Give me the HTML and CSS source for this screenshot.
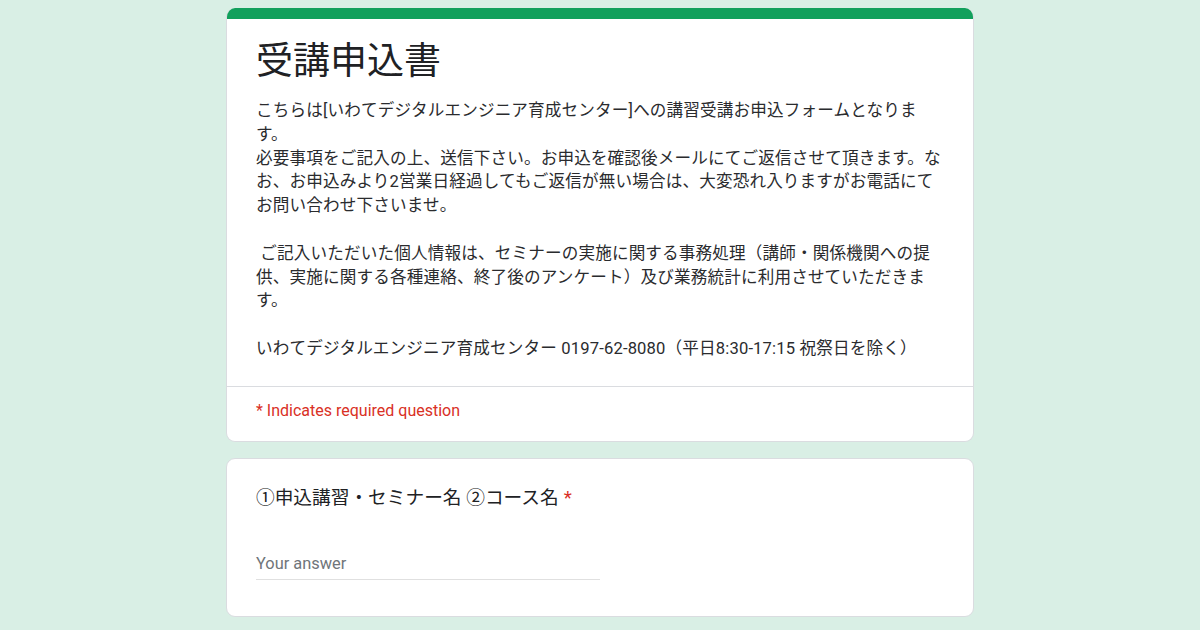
FILE: index.html
```html
<!DOCTYPE html>
<html lang="ja">
<head>
    <meta charset="utf-8">
    <title>受講申込書</title>
    <link rel="stylesheet" href="styles.css">
</head>
<body>
    <div class="form">
        <div class="card header-card">
            <div class="accent"></div>
            <div class="header-body">
                <h1 class="title">受講申込書</h1>
                <div class="desc">
                    こちらは[いわてデジタルエンジニア育成センター]への講習受講お申込フォームとなりま<br>す。<br>
                    必要事項をご記入の上、送信下さい。お申込を確認後メールにてご返信させて頂きます。な<br>お、お申込みより2営業日経過してもご返信が無い場合は、大変恐れ入りますがお電話にて<br>お問い合わせ下さいませ。<br>
                    <br>
                    &nbsp;ご記入いただいた個人情報は、セミナーの実施に関する事務処理（講師・関係機関への提<br>供、実施に関する各種連絡、終了後のアンケート）及び業務統計に利用させていただきま<br>す。<br>
                    <br>
                    いわてデジタルエンジニア育成センター 0197-62-8080（平日8:30-17:15 祝祭日を除く）
                </div>
            </div>
            <div class="required-note">* Indicates required question</div>
        </div>

        <div class="card question-card">
            <div class="question">①申込講習・セミナー名 ②コース名<span class="star">*</span></div>
            <div class="answer">Your answer</div>
        </div>
    </div>
</body>
</html>
```

FILE: styles.css
```css
body { margin: 0; background: #d9efe5; font-family: Roboto, "Noto Sans CJK JP", sans-serif; color: #202124; }
.form { width: 748px; margin: 8px auto 0; display: flex; flex-direction: column; gap: 16px; }
.card { background: #fff; border: 1px solid #dadce0; border-radius: 9px; box-sizing: border-box; overflow: hidden; }
.header-card { border-top: none; }
.accent { height: 11px; background: #12a05c; }
.header-body { padding: 18px 29px 25px; border-bottom: 1px solid #dadce0; }
.title { margin: 0 0 12px; font-size: 37px; font-weight: 400; line-height: 50px; }
.desc { font-size: 16.6px; line-height: 23.8px; letter-spacing: 0.15px; color: #2a2b2e; }
.required-note { padding: 14px 29px 20px; font-size: 16px; line-height: 20px; color: #d93025; }
.question-card { padding: 28px 29px 36px; }
.question { font-size: 18.7px; line-height: 22px; }
.star { color: #d93025; padding-left: 5px; }
.answer { width: 50%; margin-top: 45px; padding-bottom: 5px; border-bottom: 1px solid #e0e0e0; font-size: 16.4px; line-height: 20px; color: #70757a; }
```
